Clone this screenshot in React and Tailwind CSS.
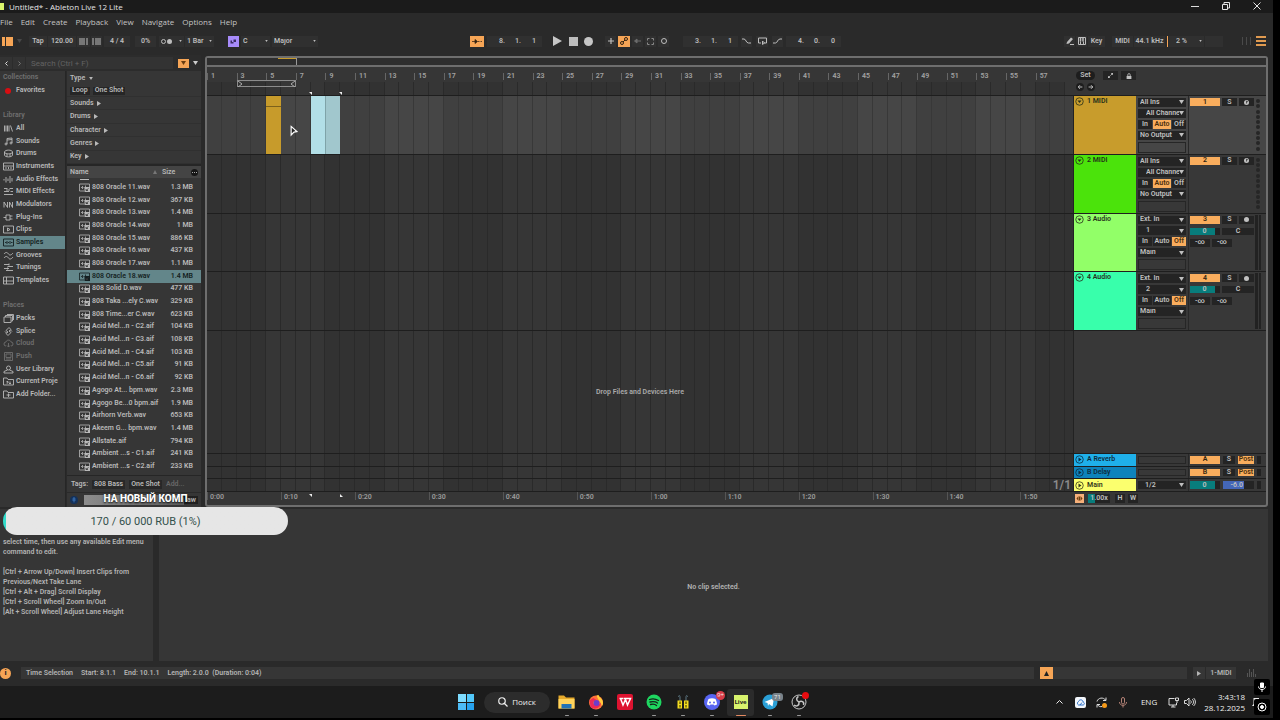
import React from 'react';

const BARS = 58;

const ICONS = {
  all: <path d="M3 3v12M6 3v12M9 3v12M12 3v12M15 3l4 12" />,
  sounds: <path d="M8 14V3l10-1v10M8 6l10-1M8 14a2 2 0 1 1-4 0 2 2 0 1 1 4 0M18 12a2 2 0 1 1-4 0 2 2 0 1 1 4 0" />,
  drums: <path d="M3 6c0-5 16-5 16 0s-16 5-16 0v6c0 5 16 5 16 0V6M8 10v5M14 10v5" />,
  instruments: <path d="M1 2h20v14H1zM1 8h20M6 10v4M11 10v4M16 10v4" />,
  audioFx: <path d="M2 8v3M6 4v11M10 7v5M14 2v14M18 6v7" />,
  midiFx: <path d="M2 3h7M13 3h7M2 9h10M15 9h5M2 15h18M6 6h8" />,
  modulators: <path d="M2 15V4l7 11V4M13 15V4l6 11V4" />,
  plugins: <path d="M1 9h5M6 4h8v10H6zM14 6h5M14 12h5" />,
  clips: <path d="M1 2h20v14H1zM9 6v6l5-3z" />,
  samples: <path d="M1 2h20v14H1zM4 9h3M8 6v6M11 8v2M14 6v6M16 9h3" />,
  grooves: <path d="M2 6c4-5 7-3 9 0s5 3 9-2M2 14c4-5 7-3 9 0s5 3 9-2" />,
  tunings: <path d="M2 3h10M9 7h11M2 11h10M6 15h14M12 1v4M9 9v4" />,
  templates: <path d="M1 2h20v14H1zM1 10h20M7 2v14" />,
  packs: <path d="M2 6h14v11H2zM5 6V3h14v11h-3M8 1h13v11" />,
  splice: <path d="M12 1l-6 6 4 3-4 3 4 4 6-6-4-3 4-3zM4 9l3 3M15 6l3 3" />,
  cloud: <path d="M6 14a4 4 0 0 1 0-8c1-5 9-5 10 0a4 4 0 0 1 0 8M11 8v8M8 13l3 3 3-3" />,
  push: <path d="M3 1h16v16H3zM6 4h10v7H6zM6 14h10" />,
  user: <path d="M7 6a4 4 0 1 1 8 0a4 4 0 1 1-8 0M9 10l-7 3v3h18v-3l-7-3" />,
  project: <path d="M1 16V2h7l2 3h11v11zM7 9h3v3H7M14 9v4M12 13h4" />,
  add: <path d="M1 16V2h7l2 3h11v11zM11 7v7M7 10h8" />,
};

const LIBRARY = [
  ['all', 'All'],
  ['sounds', 'Sounds'],
  ['drums', 'Drums'],
  ['instruments', 'Instruments'],
  ['audioFx', 'Audio Effects'],
  ['midiFx', 'MIDI Effects'],
  ['modulators', 'Modulators'],
  ['plugins', 'Plug-Ins'],
  ['clips', 'Clips'],
  ['samples', 'Samples'],
  ['grooves', 'Grooves'],
  ['tunings', 'Tunings'],
  ['templates', 'Templates'],
];

const PLACES = [
  ['packs', 'Packs'],
  ['splice', 'Splice'],
  ['cloud', 'Cloud'],
  ['push', 'Push'],
  ['user', 'User Library'],
  ['project', 'Current Proje'],
  ['add', 'Add Folder...'],
];

const FILES = [
  ['808 Oracle 11.wav', '1.3 MB'],
  ['808 Oracle 12.wav', '367 KB'],
  ['808 Oracle 13.wav', '1.4 MB'],
  ['808 Oracle 14.wav', '1 MB'],
  ['808 Oracle 15.wav', '886 KB'],
  ['808 Oracle 16.wav', '437 KB'],
  ['808 Oracle 17.wav', '1.1 MB'],
  ['808 Oracle 18.wav', '1.4 MB'],
  ['808 Solid D.wav', '477 KB'],
  ['808 Taka ...ely C.wav', '329 KB'],
  ['808 Time...er C.wav', '623 KB'],
  ['Acid Mel...n - C2.aif', '104 KB'],
  ['Acid Mel...n - C3.aif', '108 KB'],
  ['Acid Mel...n - C4.aif', '103 KB'],
  ['Acid Mel...n - C5.aif', '91 KB'],
  ['Acid Mel...n - C6.aif', '92 KB'],
  ['Agogo At... bpm.wav', '2.3 MB'],
  ['Agogo Be...0 bpm.aif', '1.9 MB'],
  ['Airhorn Verb.wav', '653 KB'],
  ['Akeem G... bpm.wav', '1.4 MB'],
  ['Allstate.aif', '794 KB'],
  ['Ambient ...s - C1.aif', '241 KB'],
  ['Ambient ...s - C2.aif', '233 KB'],
];

const TRACKS = [
  { id: '1', name: '1 MIDI', color: 'bg-[#c89c2c]', input: 'All Ins', channel: 'All Channels', output: 'No Output', monitor: 'Auto', midi: true },
  { id: '2', name: '2 MIDI', color: 'bg-[#4be30b]', input: 'All Ins', channel: 'All Channels', output: 'No Output', monitor: 'Auto', midi: true },
  { id: '3', name: '3 Audio', color: 'bg-[#92ff68]', input: 'Ext. In', channel: '1', output: 'Main', monitor: 'Off' },
  { id: '4', name: '4 Audio', color: 'bg-[#38ffab]', input: 'Ext. In', channel: '2', output: 'Main', monitor: 'Off' },
];

const Glyph = ({ name }) => (
  <svg viewBox="0 0 22 18" className="w-[11px] h-[9px] shrink-0" fill="none" stroke="currentColor" strokeWidth="1.8">
    {ICONS[name]}
  </svg>
);

const Caret = ({ className = 'w-[5px] h-1' }) => (
  <svg viewBox="0 0 10 8" className={`shrink-0 ${className}`} fill="currentColor">
    <path d="M0 0h10L5 8z" />
  </svg>
);

const Right = () => (
  <svg viewBox="0 0 8 10" className="w-1 h-[5px] shrink-0" fill="currentColor">
    <path d="M0 0v10l8-5z" />
  </svg>
);

const Pick = ({ label, value, className = '', inner = 'pl-[2px]', caret }) => (
  <span className={`flex items-center min-w-0 pr-[2px] ${className}`}>
    <select aria-label={label} className={`appearance-none flex-1 min-w-0 h-full outline-none bg-transparent leading-none ${inner}`} defaultValue={value}>
      <option>{value}</option>
    </select>
    <Caret className={caret} />
  </span>
);

const TitleBar = () => (
  <div className="flex items-center h-[13px] pb-px bg-[#1b1b1b] text-[#e4e4e4] font-['Open_Sans',sans-serif]">
    <span className="w-1 h-[7px] bg-[#d9f36b]" />
    <h1 className="ml-[5px] text-[8px] leading-[11px] font-medium">Untitled* - Ableton Live 12 Lite</h1>
    <div className="ml-auto flex items-center gap-[23px] pr-3">
      <button aria-label="Minimize" className="w-2 h-px bg-[#ddd]" />
      <button aria-label="Restore">
        <svg viewBox="0 0 16 16" className="w-2 h-2" fill="none" stroke="currentColor" strokeWidth="2">
          <path d="M1 5h10v10H1zM4 4V1h11v11h-3" />
        </svg>
      </button>
      <button aria-label="Close">
        <svg viewBox="0 0 16 16" className="w-2 h-2" fill="none" stroke="currentColor" strokeWidth="2">
          <path d="M1 1l14 14M15 1L1 15" />
        </svg>
      </button>
    </div>
  </div>
);

const MenuBar = () => (
  <nav className="flex items-center gap-2 h-[18px] text-[8px] text-[#c4c4c4] font-['Open_Sans',sans-serif]">
    {['File', 'Edit', 'Create', 'Playback', 'View', 'Navigate', 'Options', 'Help'].map((m) => (
      <button key={m}>{m}</button>
    ))}
  </nav>
);

const box = 'h-[11px] bg-[#303030] flex items-center justify-center shrink-0';

const Position = ({ label, parts }) => (
  <div role="group" aria-label={label} className="h-[11px] w-[55px] pl-[7px] bg-[#303030] grid grid-cols-3 items-center text-center shrink-0">
    {parts.map((p, i) => (
      <span key={i}>{p}</span>
    ))}
  </div>
);

const Toolbar = () => (
  <div className="flex items-center h-6 pb-1 text-[7px] leading-none font-semibold text-[#bdbdbd]">
    <div className="w-[470px] shrink-0 flex items-center">
      <button aria-label="Toggle browser" className="ml-[2px] flex gap-px w-[11px] h-[9px]">
        <span className="w-[3px] h-full bg-[#f6a556]" />
        <span className="flex-1 h-full bg-[#f6a556]" />
      </button>
      <Caret className="w-[5px] h-1 ml-1 text-[#484848]" />
      <button className={`${box} ml-[7px] w-[18px]`}>Tap</button>
      <input aria-label="Tempo" defaultValue="120.00" className="ml-px h-[11px] w-[28px] bg-[#303030] text-center shrink-0" />
      <button aria-label="Nudge down" className={`${box} ml-px w-[13px]`}>
        <svg viewBox="0 0 18 14" className="w-[9px] h-[7px]" stroke="currentColor" strokeWidth="2"><path d="M2 0v14M6 0v14M10 0v14M16 0v14" /></svg>
      </button>
      <button aria-label="Nudge up" className={`${box} ml-px w-[11px]`}>
        <svg viewBox="0 0 18 14" className="w-[9px] h-[7px]" stroke="currentColor" strokeWidth="2"><path d="M2 0v14M8 0v14M12 0v14M16 0v14" /></svg>
      </button>
      <input aria-label="Time signature" defaultValue="4 / 4" className="ml-[2px] h-[11px] w-[26px] bg-[#303030] text-center shrink-0" />
      <input aria-label="Groove amount" defaultValue="0%" className="ml-[5px] h-[11px] w-[21px] bg-[#303030] text-center shrink-0" />
      <button aria-label="Metronome" className={`${box} ml-[3px] w-[25px] gap-px`}>
        <span className="size-[5px] rounded-full border border-[#bdbdbd]" />
        <span className="size-[5px] rounded-full bg-[#bdbdbd]" />
        <Caret className="ml-[6px] w-[3px] h-[2px]" />
      </button>
      <Pick label="Quantization" value="1 Bar" className="ml-px h-[11px] w-[29px] bg-[#303030]" caret="w-[3px] h-[2px]" />
      <button aria-label="Scale mode" className="ml-[14px] size-[11px] bg-[#a78bfa] flex items-center justify-center text-[#3a2c63]">
        <svg viewBox="0 0 14 14" className="size-[7px]" fill="currentColor"><path d="M1 5h3v6H1zM4 8h3v3H4zM7 3h5v5H7z" /></svg>
      </button>
      <Pick label="Root note" value="C" className="ml-[2px] h-[11px] w-[29px] bg-[#303030]" inner="pl-[2px]" caret="w-[3px] h-[2px]" />
      <Pick label="Scale name" value="Major" className="ml-[2px] h-[11px] w-[46px] bg-[#303030]" caret="w-[3px] h-[2px]" />
    </div>

    <button aria-label="Follow" className="h-[11px] w-[14px] bg-[#f6a556] text-[#332211] flex items-center justify-center">
      <svg viewBox="0 0 20 10" className="w-[10px] h-[5px]" fill="currentColor" stroke="currentColor" strokeWidth="1.5"><path d="M0 5h6M6 1l5 4-5 4zM12 5h2M15 5h2M18 5h2" /></svg>
    </button>
    <div className="ml-[3px]"><Position label="Arrangement position" parts={['8.', '1.', '1']} /></div>
    <div className="ml-[11px] flex items-center gap-[6px] text-[#c6c6c6]">
      <button aria-label="Play"><svg viewBox="0 0 10 10" className="size-[10px]" fill="currentColor"><path d="M0 0v10l9-5z" /></svg></button>
      <button aria-label="Stop" className="size-[9px] bg-[#bdbdbd]" />
      <button aria-label="Record" className="size-[9px] rounded-full bg-[#c6c6c6]" />
    </div>
    <div className="ml-3 flex items-center gap-[2px]">
      <button aria-label="Overdub" className={`${box} w-[11px]`}>
        <svg viewBox="0 0 10 10" className="size-[6px]" stroke="currentColor" strokeWidth="2"><path d="M5 0v10M0 5h10" /></svg>
      </button>
      <button aria-label="Automation arm" className="h-[11px] w-3 bg-[#f6a556] text-[#332211] flex items-center justify-center">
        <svg viewBox="0 0 16 16" className="size-2" fill="none" stroke="currentColor" strokeWidth="2"><circle cx="4" cy="12" r="3" /><circle cx="12" cy="4" r="3" /><path d="M6 10l4-4" /></svg>
      </button>
      <button aria-label="Re-enable automation" className={`${box} w-[11px] text-[#6c6c6c]`}>
        <svg viewBox="0 0 14 12" className="w-[7px] h-[6px]" fill="currentColor" stroke="currentColor" strokeWidth="2"><path d="M14 6H6M6 2L1 6l5 4z" /></svg>
      </button>
      <button aria-label="Capture" className={`${box} w-[11px] text-[#8a8a8a]`}>
        <svg viewBox="0 0 14 14" className="size-[7px]" fill="none" stroke="currentColor" strokeWidth="2"><path d="M1 5V1h4M9 1h4v4M13 9v4H9M5 13H1V9" /></svg>
      </button>
      <button aria-label="Session record" className={`${box} w-[11px]`}>
        <span className="size-[6px] rounded-full border border-[#bdbdbd]" />
      </button>
    </div>
    <div className="ml-[14px] flex items-center">
      <Position label="Loop start" parts={['3.', '1.', '1']} />
      <div className="flex items-center gap-1 px-[3px]">
        <button aria-label="Punch in" className={`${box} w-[11px]`}><svg viewBox="0 0 18 12" className="w-[9px] h-[6px]" fill="none" stroke="currentColor" strokeWidth="2"><path d="M0 2h4c4 0 4 8 9 8h5" /></svg></button>
        <button aria-label="Loop" className={`${box} w-3`}><svg viewBox="0 0 18 16" className="w-[9px] h-2" fill="none" stroke="currentColor" strokeWidth="2"><path d="M6 12H1V2h16v10h-5M9 8l4 4-4 3z" /></svg></button>
        <button aria-label="Punch out" className={`${box} w-[11px]`}><svg viewBox="0 0 18 12" className="w-[9px] h-[6px]" fill="none" stroke="currentColor" strokeWidth="2"><path d="M0 10h5c4 0 4-8 9-8h4" /></svg></button>
      </div>
      <Position label="Loop length" parts={['4.', '0.', '0']} />
    </div>

    <div className="ml-auto pr-[7px] flex items-center">
      <button aria-label="Draw mode" className={`${box} w-[11px]`}>
        <svg viewBox="0 0 16 16" className="size-2" fill="currentColor"><path d="M2 10l8-9 4 3-8 9-5 1zM8 14h8v2H8z" /></svg>
      </button>
      <button aria-label="Computer MIDI keyboard" className={`${box} ml-px w-[11px]`}>
        <svg viewBox="0 0 16 16" className="size-2" fill="none" stroke="currentColor" strokeWidth="2"><path d="M1 1h14v14H1zM5 9v6M11 9v6" /><path d="M5 1v8M10 1v8" strokeWidth="3" /></svg>
      </button>
      <button className={`${box} ml-px w-[17px]`}>Key</button>
      <button className={`${box} ml-[7px] w-[21px]`}>MIDI</button>
      <button className={`${box} ml-px w-[31px]`}>44.1 kHz</button>
      <span className="ml-[2px] w-px h-[11px] bg-[#f6a556]" />
      <Pick label="CPU meter" value="2 %" className="ml-px h-[11px] w-[35px] bg-[#303030]" inner="pl-[7px]" caret="w-[3px] h-[2px]" />
      <span className={`${box} ml-px w-[18px]`} />
      <span className="ml-[19px] flex gap-[3px]">
        <span className="w-px h-2 bg-[#4a4a4a]" />
        <span className="w-px h-2 bg-[#4a4a4a]" />
        <span className="w-px h-2 bg-[#4a4a4a]" />
      </span>
      <button aria-label="View options" className="ml-[5px] w-[10px] flex flex-col gap-[2px]">
        <span className="h-[2px] bg-[#e09a50]" />
        <span className="h-[2px] bg-[#e09a50]" />
        <span className="h-[2px] bg-[#e09a50]" />
      </button>
    </div>
  </div>
);

const SideItem = ({ icon, label }) => {
  const active = icon === 'samples';
  const dim = icon === 'cloud' || icon === 'push';
  return (
    <button className={`flex flex-1 w-full items-center gap-[2px] pl-[3px] overflow-hidden whitespace-nowrap ${active ? 'bg-[#63868a] text-[#141f21]' : dim ? 'text-[#6e6e6e]' : ''}`}>
      <Glyph name={icon} />
      {label}
    </button>
  );
};

const Sidebar = () => (
  <aside className="w-[66px] shrink-0 bg-[#363636] border-r border-[#262626] flex flex-col">
    <h2 className="h-[13px] leading-[13px] pl-[3px] text-[#707070]">Collections</h2>
    <button className="h-[13px] flex items-center gap-[5px] pl-[5px]">
      <span className="size-[6px] rounded-full bg-[#d80d12]" />
      Favorites
    </button>
    <h2 className="mt-3 h-[13px] leading-[13px] pl-[3px] text-[#707070]">Library</h2>
    <div className="h-[165px] flex flex-col">
      {LIBRARY.map(([icon, label]) => <SideItem key={icon} icon={icon} label={label} />)}
    </div>
    <h2 className="mt-3 h-[13px] leading-[13px] pl-[3px] text-[#707070]">Places</h2>
    <div className="h-[89px] flex flex-col">
      {PLACES.map(([icon, label]) => <SideItem key={icon} icon={icon} label={label} />)}
    </div>
  </aside>
);

const FileIcon = () => (
  <svg viewBox="0 0 22 18" className="w-[11px] h-[9px] ml-3 shrink-0" fill="none" stroke="currentColor" strokeWidth="1.6">
    <path d="M10 16H1V2h20v6M4 9h2M7 6v6M10 8v2M13 5v3" />
    <path d="M11 8h11v10H11z" fill="currentColor" stroke="none" />
    <path d="M14 15l5-4M14 12v3h4" stroke="#363636" />
  </svg>
);

const FileList = () => (
  <table className="w-full h-[307px] border-collapse table-fixed">
    <thead className="bg-[#444]">
      <tr className="h-3">
        <th scope="col" className="w-[91px] p-0 pl-[3px] text-left font-semibold">
          <span className="flex items-center justify-between pr-px">
            Name
            <svg viewBox="0 0 8 8" className="size-1" fill="#777"><path d="M4 0l4 8H0z" /></svg>
          </span>
        </th>
        <th scope="col" className="p-0 pl-1 text-left font-semibold">
          <span className="flex items-center justify-between pr-[3px]">
            Size
            <button aria-label="Columns" className="w-[7px] h-[7px] rounded-full bg-[#161616] flex items-center justify-center gap-px">
              <span className="size-px bg-[#aaa]" /><span className="size-px bg-[#aaa]" /><span className="size-px bg-[#aaa]" />
            </button>
          </span>
        </th>
      </tr>
    </thead>
    <tbody>
      <tr className="h-[3px]" aria-hidden="true">
        <td colSpan="2" className="p-0"><span className="block ml-[13px] w-[9px] h-px bg-[#bbb]" /></td>
      </tr>
      {FILES.map(([name, size]) => (
        <tr key={name} className={name === '808 Oracle 18.wav' ? 'bg-[#63868a] text-[#141f21]' : ''}>
          <td className="p-0"><span className="flex items-center gap-[2px] whitespace-nowrap"><FileIcon />{name}</span></td>
          <td className="p-0 pr-2 text-right whitespace-nowrap">{size}</td>
        </tr>
      ))}
    </tbody>
  </table>
);

const Browser = () => (
  <section className="w-[201px] shrink-0 flex flex-col text-[7px] leading-none font-semibold text-[#b9b9b9]">
    <div className="h-4 flex items-center gap-px bg-[#2c2c2c]">
      <button aria-label="Back" className="w-3 h-3 bg-[#333] text-[#ddd] flex items-center justify-center">
        <svg viewBox="0 0 6 10" className="w-[3px] h-[5px]" fill="none" stroke="currentColor" strokeWidth="2"><path d="M5 1L1 5l4 4" /></svg>
      </button>
      <button aria-label="Forward" className="w-3 h-3 bg-[#333] text-[#777] flex items-center justify-center">
        <svg viewBox="0 0 6 10" className="w-[3px] h-[5px]" fill="none" stroke="currentColor" strokeWidth="2"><path d="M1 1l4 4-4 4" /></svg>
      </button>
      <input aria-label="Search" placeholder="Search (Ctrl + F)" className="h-3 flex-1 min-w-0 pl-[5px] bg-[#333] text-[8px] font-normal placeholder:text-[#626262]" />
      <button aria-label="Filter" className="ml-1 w-[11px] h-[9px] bg-[#f6a556] text-[#6b3d10] flex items-center justify-center"><Caret /></button>
      <button aria-label="Filter options" className="ml-[3px] mr-[3px] text-[#ccc]"><Caret /></button>
    </div>
    <div className="flex flex-1">
      <Sidebar />
      <div className="flex-1 min-w-0 ml-px bg-[#363636] flex flex-col">
        <button className="h-[14px] flex items-center gap-1 pl-[3px]">Type <Caret className="w-1 h-[3px]" /></button>
        <div className="h-3 flex items-center gap-[3px] pl-[3px] border-b border-[#303030]">
          <button className="h-2 px-[2px] bg-[#262626]">Loop</button>
          <button className="h-2 px-[2px] bg-[#262626]">One Shot</button>
        </div>
        <div className="h-[67px] flex flex-col">
          {['Sounds', 'Drums', 'Character', 'Genres', 'Key'].map((f) => (
            <button key={f} className="flex-1 flex items-center gap-[3px] pl-[3px] border-b border-[#303030]">{f} <Right /></button>
          ))}
        </div>
        <div className="border-t-2 border-[#262626]"><FileList /></div>
        <div className="mt-[2px] flex-1 flex items-center gap-1 pl-1 border-t border-[#262626]">
          Tags:
          <button className="h-[9px] px-[2px] bg-[#282828]">808 Bass</button>
          <button className="h-[9px] px-[2px] bg-[#282828]">One Shot</button>
          <button className="text-[#686868]">Add...</button>
        </div>
        <div className="h-[15px] flex items-center pl-[3px] pr-[3px] border-t border-[#2a2a2a]">
          <button aria-label="Preview" className="size-2 rounded-full bg-[#14315a] text-[#4e96e8] flex items-center justify-center">
            <svg viewBox="0 0 10 10" className="size-[6px]" fill="none" stroke="currentColor"><path d="M5 1v8M3 3l2-2 2 2M2 5h6" /></svg>
          </button>
          <span className="ml-[6px] flex-1 h-[10px] bg-gradient-to-r from-[#8d8d8d] to-[#5c5c5c]" />
          <button aria-label="Raw" className="h-2 w-[14px] pr-[2px] text-right bg-[#202020]">aw</button>
        </div>
      </div>
    </div>
  </section>
);

const Grid = ({ light }) => (
  <div className="absolute inset-0 flex">
    {Array.from({ length: BARS }, (_, i) => {
      const odd = Math.floor(i / 4) % 2;
      const shade = light ? (odd ? 'bg-[#464646]' : 'bg-[#404040]') : odd ? 'bg-[#363636]' : 'bg-[#323232]';
      return <span key={i} className={`flex-1 border-r ${light ? 'border-[#383838]' : 'border-[#2a2a2a]'} ${shade}`} />;
    })}
  </div>
);

const at = (bar) => `${((bar - 1) / BARS) * 100}%`;
const span = (n) => `${(n / BARS) * 100}%`;

// One arrangement row: the lane on the left, its header on the right
const Row = ({ light, className = '', lane, children }) => (
  <div className={`flex border-b border-[#1e1e1e] ${className}`}>
    <div className="relative flex-1">
      <Grid light={light} />
      {lane}
    </div>
    <div className={`w-[9px] shrink-0 border-r border-[#222] ${light ? 'bg-[#404040]' : 'bg-[#323232]'}`} />
    <div className={`w-[192px] shrink-0 flex ${light ? 'bg-[#464646]' : 'bg-[#383838]'}`}>{children}</div>
  </div>
);

const RoundIcon = ({ play }) => (
  <svg viewBox="0 0 18 18" className="size-[9px] shrink-0" fill="none" stroke="currentColor" strokeWidth="1.6">
    <circle cx="9" cy="9" r="7.5" />
    <path d={play ? 'M7 5v8l6-4z' : 'M5 7h8l-4 5z'} fill="currentColor" stroke="none" />
  </svg>
);

const dark = 'bg-[#242424] flex items-center justify-center';

const Mixer = ({ track }) => (
  <div className="flex-1 flex border-l border-[#282828]">
    <div className="w-[66px] px-px pt-px flex flex-col gap-[2px]">
      <div className="h-[10px] py-px flex gap-[2px]">
        <button className="w-[30px] bg-[#f9ad5d] text-[#33240f]">{track.id}</button>
        <button className={`${dark} w-[15px]`}>S</button>
        <button aria-label="Arm" className={`${dark} w-[15px]`}>
          <svg viewBox="0 0 10 10" className="size-[5px]" fill="currentColor">
            <circle cx="5" cy="5" r="5" />
            {track.midi && <path d="M5 7V2l3 2" fill="none" stroke="#242424" strokeWidth="1.4" />}
          </svg>
        </button>
      </div>
      {!track.midi && (
        <>
          <div className="h-[9px] py-px flex gap-[2px]">
            <button aria-label="Volume" className="w-[30px] bg-[#242424] text-left"><span className="flex items-center justify-center w-[25px] h-full pl-1 bg-[#087d7c]">0</span></button>
            <button aria-label="Pan" className={`${dark} w-8`}>C</button>
          </div>
          <div className="h-[10px] py-px flex gap-[2px]">
            <button aria-label="Send A" className={`${dark} w-[20px]`}>-∞</button>
            <button aria-label="Send B" className={`${dark} w-[20px]`}>-∞</button>
          </div>
        </>
      )}
    </div>
    {track.midi ? (
      <div className="w-[6px] my-[3px] flex flex-col justify-between items-center">
        {Array.from({ length: 10 }, (_, i) => <span key={i} className="size-1 rounded-full bg-[#262626]" />)}
      </div>
    ) : (
      <div className="w-[6px] my-px flex gap-px">
        <span className="flex-1 bg-[#222]" />
        <span className="flex-1 bg-[#222]" />
      </div>
    )}
  </div>
);

const TrackHeader = ({ track }) => (
  <>
    <div className={`w-[62px] shrink-0 ${track.color} flex items-start gap-[3px] pl-px pt-[1px] text-[#26301a]`}>
      <button aria-label="Fold track"><RoundIcon /></button>
      <span className="leading-[9px]">{track.name}</span>
    </div>
    <div className="w-[52px] shrink-0 px-[2px] pt-[2px] pb-px flex flex-col gap-[2px]">
      <Pick label={`${track.name} input`} value={track.input} className="flex-1 bg-[#242424]" />
      <Pick label={`${track.name} input channel`} value={track.channel} className="flex-1 bg-[#242424]" inner="pl-[8px]" />
      <div className="flex-1 flex gap-px">
        {['In', 'Auto', 'Off'].map((m) => (
          <button key={m} className={`${m === 'Auto' ? 'w-[18px]' : 'flex-1'} ${m === track.monitor ? 'bg-[#f9ad5d] text-[#4a2e0c]' : 'bg-[#242424]'}`}>{m}</button>
        ))}
      </div>
      <Pick label={`${track.name} output`} value={track.output} className="flex-1 bg-[#242424]" />
      <div className="flex-1 border border-[#262626]" />
    </div>
    <Mixer track={track} />
  </>
);

const clips = (
  <>
    <div className="absolute inset-y-0 bg-[#c79b2b]" style={{ left: at(5), width: span(1) }}>
      <div className="h-[11px] border-b border-[#7c611c]" />
    </div>
    <div className="absolute inset-y-0 flex" style={{ left: at(8), width: span(2) }}>
      <span className="flex-1 bg-[#b2dfe7] border-r border-[#7fa3a8]" />
      <span className="flex-1 bg-[#a1c7cd]" />
    </div>
    <svg viewBox="0 0 14 20" className="absolute top-[29px] w-2 h-3" style={{ left: at(6.6) }} fill="#222" stroke="#fff" strokeWidth="2">
      <path d="M2 2l10 9-5 1-5 5z" />
    </svg>
  </>
);

const Handle = ({ bar, flip, className }) => (
  <svg viewBox="0 0 4 4" className={`absolute size-[3px] ${className}`} style={{ left: at(bar) }} fill="#eee">
    <path d={flip ? 'M0 4h4L0 0z' : 'M0 0h4v4z'} />
  </svg>
);

const Ruler = () => (
  <div className="flex h-[29px] border-b border-[#1e1e1e] bg-[#363636]">
    <div className="relative flex-1 flex flex-col">
      <div className="h-[15px] flex pt-[6px]">
        {Array.from({ length: BARS / 2 }, (_, i) => (
          <span key={i} className="flex-1 basis-0 min-w-0 border-l border-[#666] pl-[3px] text-[#a3a3a3] text-[7px] leading-[7px] h-[7px]">{i * 2 + 1}</span>
        ))}
      </div>
      <div className="relative flex-1">
        <Grid />
      </div>
      <div className="absolute top-[13px] h-[7px] border border-[#8c8c8c] flex items-center justify-between text-[#aaa]" style={{ left: at(3), width: span(4) }}>
        <svg viewBox="0 0 5 6" className="w-[5px] h-[6px]" fill="none" stroke="currentColor"><path d="M0 0l4 3-4 3" /></svg>
        <svg viewBox="0 0 5 6" className="w-[5px] h-[6px]" fill="none" stroke="currentColor"><path d="M5 0L1 3l4 3" /></svg>
      </div>
      <Handle bar={7.9} className="bottom-0" />
      <Handle bar={9.9} className="bottom-0" />
    </div>
    <div className="w-[9px] shrink-0" />
    <div className="w-[192px] shrink-0 pl-[2px] pt-1 flex flex-col gap-[3px]">
      <div className="flex items-center gap-2 h-[9px]">
        <button className="h-[9px] w-[19px] rounded-full bg-[#1d1d1d]">Set</button>
        <div className="flex gap-[3px]">
          <button aria-label="Automation mode" className={`${dark} w-[15px] h-[9px]`}>
            <svg viewBox="0 0 10 10" className="size-[5px]" fill="currentColor" stroke="currentColor"><path d="M2 8l6-6M0 7h3v3H0zM7 0h3v3H7z" /></svg>
          </button>
          <button aria-label="Lock envelopes" className={`${dark} w-[15px] h-[9px]`}>
            <svg viewBox="0 0 10 10" className="size-[6px]" fill="currentColor"><path d="M1 5h8v5H1z" /><path d="M3 5V3a2 2 0 0 1 4 0v2" fill="none" stroke="currentColor" strokeWidth="1.4" /></svg>
          </button>
        </div>
      </div>
      <div className="flex gap-[3px] h-2">
        {['M9 5H2M5 2L2 5l3 3', 'M1 5h7M5 2l3 3-3 3'].map((d) => (
          <button key={d} aria-label="Locator" className="size-2 rounded-full bg-[#1d1d1d] flex items-center justify-center">
            <svg viewBox="0 0 10 10" className="size-[6px]" fill="none" stroke="currentColor" strokeWidth="1.6"><path d={d} /></svg>
          </button>
        ))}
      </div>
    </div>
  </div>
);

const TIMES = ['0:00', '0:10', '0:20', '0:30', '0:40', '0:50', '1:00', '1:10', '1:20', '1:30', '1:40', '1:50'];

const Returns = ({ id, name, color }) => (
  <>
    <div className={`w-[62px] shrink-0 ${color} flex items-center gap-[3px] pl-px text-[#0d2c40]`}>
      <button aria-label={`Unfold ${name}`}><RoundIcon play /></button>
      {name}
    </div>
    <div className="w-[52px] shrink-0 p-[2px] flex"><div className="flex-1 border border-[#262626]" /></div>
    <div className="flex-1 flex gap-[3px] pl-px py-[2px] border-l border-[#282828]">
      <button className="w-[30px] bg-[#f9ad5d] text-[#33240f]">{id}</button>
      <button className={`${dark} w-3`}>S</button>
      <button className="w-4 bg-[#f9ad5d] text-[#4a2e0c]">Post</button>
      <span className="w-1 bg-[#222]" />
    </div>
  </>
);

const Arrangement = () => (
  <section className="flex-1 min-w-0 ml-1 mr-[5px] mt-px border-2 border-[#6e6e6e] rounded-[3px] bg-[#363636] flex flex-col text-[7px] leading-none font-semibold text-[#c0c0c0]">
    <div className="relative h-[9px] border-b-2 border-[#6e6e6e] bg-[#2e2e2e]">
      <div className="absolute inset-y-0 left-0 w-[90px] border-r border-[#999] flex justify-end">
        <span className="w-[18px] h-px bg-[#c79b2b]" />
      </div>
    </div>
    <Ruler />
    <div className="h-[235px] flex flex-col">
      {TRACKS.map((t, i) => (
        <Row key={t.id} light={i === 0} className="flex-1" lane={i === 0 ? clips : null}>
          <TrackHeader track={t} />
        </Row>
      ))}
    </div>
    <Row className="flex-1" lane={(
      <span className="absolute inset-0 flex items-center justify-center pl-2 text-[#aaa]">Drop Files and Devices Here</span>
    )} />
    <div className="relative h-[38px] flex flex-col">
      <Row className="flex-1"><Returns id="A" name="A Reverb" color="bg-[#1fb0ea]" /></Row>
      <Row className="flex-1"><Returns id="B" name="B Delay" color="bg-[#0d83bb]" /></Row>
      <Row className="flex-1">
        <div className="w-[62px] shrink-0 bg-[#fbff6e] flex items-center gap-[3px] pl-px text-[#33351a]">
          <button aria-label="Unfold Main"><RoundIcon play /></button>
          Main
        </div>
        <div className="w-[52px] shrink-0 p-[2px] flex"><Pick label="Main output" value="1/2" className="flex-1 bg-[#242424]" inner="pl-[7px]" /></div>
        <div className="flex-1 flex gap-[3px] pl-px py-[2px] border-l border-[#282828]">
          <button aria-label="Main volume" className="w-[30px] bg-[#242424]"><span className="flex items-center justify-center w-[25px] h-full pl-1 bg-[#087d7c]">0</span></button>
          <button aria-label="Cue volume" className="w-[31px] bg-[#242424]"><span className="flex items-center justify-end pr-px w-[21px] h-full bg-[#4467b8]">-6.0</span></button>
          <span className="w-1 bg-[#222]" />
        </div>
      </Row>
      <span className="absolute bottom-0 right-[195px] text-[12px] leading-[14px] text-[#8c8c8c]">1/1</span>
    </div>
    <div className="h-[13px] flex">
      <div className="relative flex-1 flex overflow-hidden">
        {TIMES.map((t) => (
          <span key={t} className="shrink-0 h-2 border-l border-[#555] pl-[2px] pt-[2px] text-[#9c9c9c]" style={{ width: span(5) }}>{t}</span>
        ))}
        <Handle bar={7.9} className="top-[2px]" />
        <Handle bar={10} flip className="top-[2px]" />
      </div>
      <div className="w-[9px] shrink-0" />
      <div className="w-[192px] shrink-0 flex items-center gap-1 pl-px">
        <button aria-label="Optimize width" className="size-[9px] bg-[#f6b07a] text-[#6b3d10] flex items-center justify-center">
          <svg viewBox="0 0 12 10" className="w-[7px] h-[5px]" fill="currentColor"><path d="M4 0v10L0 5zM5 1h2v8H5zM8 0v10l4-5z" /></svg>
        </button>
        <button className="h-[9px] w-[22px] bg-gradient-to-r from-[#087d7c] from-30% to-[#242424] to-30%">1.00x</button>
        <div className="flex gap-[3px] pl-px">
          <button className={`${dark} h-[9px] w-[10px]`}>H</button>
          <button className={`${dark} h-[9px] w-[10px]`}>W</button>
        </div>
      </div>
    </div>
  </section>
);

const Goal = () => (
  <div className="absolute left-[3px] top-[436px] w-[285px] text-center">
    <p className="h-4 text-[10px] leading-[15px] font-extrabold text-white [text-shadow:0_1px_2px_#000]">НА НОВЫЙ КОМП</p>
    <div className="h-7 rounded-full overflow-hidden bg-gradient-to-r from-[#33dccb] from-1% to-[#e6e6e6] to-1% text-[#34504b] text-[11px] leading-[29px]">170 / 60 000 RUB (1%)</div>
  </div>
);

const Detail = () => (
  <div className="flex h-[152px] mr-[5px] text-[7px] font-semibold text-[#b4b4b4]">
    <aside className="w-[153px] shrink-0 bg-[#363636] pl-[3px] pt-[28px] leading-[10px] whitespace-nowrap">
      <p>select time, then use any available Edit menu<br />command to edit.</p>
      <p className="mt-[10px]">
        [Ctrl + Arrow Up/Down] Insert Clips from<br />
        Previous/Next Take Lane<br />
        [Ctrl + Alt + Drag] Scroll Display<br />
        [Ctrl + Scroll Wheel] Zoom In/Out<br />
        [Alt + Scroll Wheel] Adjust Lane Height
      </p>
    </aside>
    <div className="ml-[6px] pt-1 flex-1 bg-[#363636] flex items-center justify-center">No clip selected.</div>
  </div>
);

const StatusBar = () => (
  <footer className="flex items-center h-[25px] pb-px text-[7px] leading-none font-semibold text-[#b4b4b4]">
    <button aria-label="Info" className="size-[11px] rounded-full bg-[#f6a556] text-[#222] text-[8px] font-bold">i</button>
    <div className="ml-[10px] flex-1 h-3 bg-[#363636] flex items-center gap-2 pl-[5px]">
      <span>Time Selection</span>
      <span>Start: 8.1.1</span>
      <span>End: 10.1.1</span>
      <span>Length: 2.0.0&nbsp; (Duration: 0:04)</span>
    </div>
    <button aria-label="Show view" className="ml-[6px] w-[13px] h-3 bg-[#f6a556] text-[#222] flex items-center justify-center">
      <svg viewBox="0 0 8 8" className="size-[5px]" fill="currentColor"><path d="M4 0l4 8H0z" /></svg>
    </button>
    <div className="w-[134px] h-3 bg-[#363636]" />
    <button aria-label="Play clip" className="ml-[6px] w-3 h-3 bg-[#363636] flex items-center justify-center"><Right /></button>
    <button className="ml-px w-[30px] h-3 bg-[#363636]">1-MIDI</button>
    <span className="ml-[11px] mr-[17px] flex items-end gap-px h-2">
      {['h-1', 'h-2', 'h-[5px]', 'h-2', 'h-[3px]'].map((h, i) => <span key={i} className={`w-px ${h} bg-[#555]`} />)}
    </span>
  </footer>
);

const TaskIcon = ({ label, children, dot = true, active }) => (
  <button aria-label={label} className={`relative w-[27px] h-[27px] rounded-[3px] flex items-center justify-center ${active ? 'bg-[#2b2b2b]' : ''}`}>
    {children}
    {dot && <span className={`absolute bottom-0 h-px rounded-full ${active ? 'w-[10px] bg-[#e58a62]' : 'w-1 bg-[#999]'}`} />}
  </button>
);

const Taskbar = () => (
  <div className="relative flex items-center h-[33px] bg-[#1c1c1c] border-b border-black text-[#eee] font-['Open_Sans',sans-serif]">
    <div className="flex-1 basis-0" />
    <div className="flex items-center gap-[2px] ml-2">
      <button aria-label="Start" className="mr-2 grid grid-cols-2 gap-px size-4">
        <span className="bg-[#7ddcff]" /><span className="bg-[#52c8fa]" /><span className="bg-[#4cbcf7]" /><span className="bg-[#27a3ef]" />
      </button>
      <button className="mr-px h-[21px] w-[66px] rounded-full bg-[#2c2c2c] flex items-center justify-center gap-1 text-[8px]">
        <svg viewBox="0 0 20 20" className="size-[10px]" fill="none" stroke="currentColor" strokeWidth="2.4"><circle cx="8" cy="8" r="6.5" /><path d="M13 13l6 6" /></svg>
        Поиск
      </button>
      <TaskIcon label="Explorer">
        <svg viewBox="0 0 34 32" className="w-[17px] h-4"><path d="M1 3h11l4 4h17v22H1z" fill="#e5a92b" /><path d="M1 10h32v19H1z" fill="#ffd35c" /><path d="M7 20h20v9H7z" fill="#2272b5" /></svg>
      </TaskIcon>
      <TaskIcon label="Firefox">
        <svg viewBox="0 0 32 32" className="size-4"><circle cx="16" cy="17" r="14" fill="#ff7139" /><path d="M17 3c4-2 4-2 6 3 7 5 9 13 5 18-3-8-8-12-11-21z" fill="#ffcb3c" /><path d="M3 12c3 0 6-4 8-4l6 4-7 4c0 9 12 8 16 1-1 12-14 16-21 9z" fill="#ec2a55" /><circle cx="17" cy="18" r="6" fill="#6c3ccb" /></svg>
      </TaskIcon>
      <TaskIcon label="WPS Office" dot={false}>
        <svg viewBox="0 0 32 32" className="size-4"><rect width="32" height="32" rx="4" fill="#de1330" /><path d="M5 9h8M7 9l5 13 5-11 4 11 6-13H14" fill="none" stroke="#fff" strokeWidth="3" /></svg>
      </TaskIcon>
      <TaskIcon label="Spotify">
        <svg viewBox="0 0 32 32" className="size-4"><circle cx="16" cy="16" r="15" fill="#1ed760" /><path d="M7 11c6-2 13-1 18 2M8 16c5-1 11-1 15 2M9 21c4-1 9-1 12 2" fill="none" stroke="#15251a" strokeWidth="2.6" strokeLinecap="round" /></svg>
      </TaskIcon>
      <TaskIcon label="Cables">
        <svg viewBox="0 0 32 32" className="size-4"><path d="M10 14V6c0-4-3-4-3 0M22 14V6c0-4 3-4 3 0" fill="none" stroke="#5d7782" strokeWidth="2" /><path d="M5 13h9v16H5zM18 13h9v16h-9z" fill="#f3dc20" /><path d="M10 15v12M22 15v12" stroke="#292400" strokeWidth="2" strokeDasharray="5 2" /></svg>
      </TaskIcon>
      <TaskIcon label="Discord">
        <svg viewBox="0 0 32 32" className="size-4"><circle cx="16" cy="16" r="16" fill="#5865f2" /><path d="M9 10c4-2 10-2 14 0 2 4 3 8 3 11l-5 2-2-2h-6l-2 2-5-2c0-3 1-7 3-11z" fill="#fff" /><circle cx="12" cy="17" r="2" fill="#5865f2" /><circle cx="20" cy="17" r="2" fill="#5865f2" /></svg>
        <span className="absolute right-0 top-[2px] size-[9px] rounded-full bg-[#d83c48] text-[6px] leading-[9px]">9+</span>
      </TaskIcon>
      <TaskIcon label="Ableton Live" active>
        <span className="w-[14px] h-[14px] bg-[#d8f36d] text-[#1c1c1c] text-[6px] leading-[14px] font-bold">Live</span>
      </TaskIcon>
      <TaskIcon label="Telegram">
        <svg viewBox="0 0 32 32" className="size-4"><circle cx="16" cy="16" r="15" fill="#2a9fd6" /><path d="M5 16l19-8-3 17-7-5-2 4-1-6z" fill="#fff" /></svg>
        <span className="absolute right-0 top-1 w-[11px] h-[8px] rounded-[3px] bg-[#77828a] text-[6px] leading-[8px]">71</span>
      </TaskIcon>
      <TaskIcon label="OBS Studio">
        <svg viewBox="0 0 32 32" className="size-4" fill="none" stroke="#c8c8c8" strokeWidth="2"><circle cx="16" cy="16" r="14" /><path d="M16 16c-6-2-6-9-1-11M16 16c5-4 11 0 9 6M16 16c1 7-5 10-10 6" strokeWidth="3" /></svg>
        <span className="absolute right-[3px] top-[3px] size-[7px] rounded-full bg-[#e80c10]" />
      </TaskIcon>
    </div>
    <div className="flex-1 basis-0 flex items-center justify-end pr-[11px]">
      <button aria-label="Hidden icons">
        <svg viewBox="0 0 14 8" className="w-[7px] h-1" fill="none" stroke="currentColor" strokeWidth="2"><path d="M1 7l6-6 6 6" /></svg>
      </button>
      <button aria-label="Cloud drive" className="ml-3 size-[11px] rounded-[2px] bg-[#f2f6fb] flex items-center justify-center">
        <svg viewBox="0 0 18 14" className="w-[9px] h-[7px]" fill="none" stroke="#2a6fc9" strokeWidth="2"><path d="M5 12a4 4 0 0 1 0-7c2-5 9-4 9 1 4 1 3 6 0 6zM8 12l4-5" /></svg>
      </button>
      <button aria-label="Updates" className="ml-[10px] relative">
        <svg viewBox="0 0 22 22" className="size-[11px]" fill="none" stroke="#ddd" strokeWidth="2"><path d="M2 9c2-8 13-9 17-3M20 1v6h-6M2 21v-6h6M3 15c2 4 6 5 9 4" /></svg>
        <span className="absolute right-0 bottom-0 size-[5px] rounded-full bg-[#f59a1a]" />
      </button>
      <button aria-label="Microphone" className="ml-3">
        <svg viewBox="0 0 16 22" className="w-2 h-[11px]" fill="none" stroke="#b48276" strokeWidth="2"><path d="M5 4a3 3 0 0 1 6 0v7a3 3 0 0 1-6 0zM1 10c0 9 14 9 14 0M8 17v4" /></svg>
      </button>
      <button className="ml-[14px] text-[8px]">ENG</button>
      <button aria-label="Network" className="ml-[11px]">
        <svg viewBox="0 0 22 22" className="size-[11px]" fill="none" stroke="currentColor" strokeWidth="1.8"><path d="M13 3H2v13h15v-4M6 20h9M10 16v4M15 2v5h6V2zM18 7v5" /></svg>
      </button>
      <button aria-label="Volume" className="ml-[5px]">
        <svg viewBox="0 0 24 20" className="w-3 h-[10px]" fill="none" stroke="currentColor" strokeWidth="1.8"><path d="M1 7h4l5-5v16l-5-5H1zM13 7c2 2 2 4 0 6M16 4c4 3 4 9 0 12M19 2c5 4 5 12 0 16" /></svg>
      </button>
      <div className="ml-2 text-right text-[8px] leading-[11px]">3:43:18<br />28.12.2025</div>
      <button aria-label="Notifications" className="ml-[6px]">
        <svg viewBox="0 0 22 22" className="size-[11px]" fill="currentColor"><path d="M5 2h11v12l3 4H2l3-4zM8 19h6v2H8z" /></svg>
      </button>
    </div>
    <div className="absolute right-[3px] -top-[7px] flex flex-col gap-1">
      <button aria-label="Toggle mic" className="size-4 bg-black rounded-[2px] flex items-center justify-center">
        <svg viewBox="0 0 16 20" className="w-2 h-[10px]" fill="none" stroke="#fff" strokeWidth="2"><path d="M5 2h6v9H5z" fill="#fff" /><path d="M1 9c0 8 14 8 14 0M8 15v5" /></svg>
      </button>
      <button aria-label="Capture status" className="size-4 bg-black rounded-[2px] flex items-center justify-center">
        <svg viewBox="0 0 20 20" className="size-[10px]" fill="none" stroke="#fff" strokeWidth="2"><circle cx="10" cy="10" r="8" /><circle cx="10" cy="10" r="3" fill="#fff" /></svg>
      </button>
    </div>
  </div>
);

const App = () => {
  return (
    <div className="min-h-screen bg-black pr-[7px] overflow-hidden font-['Roboto','Noto_Sans',sans-serif]">
      <div className="flex flex-col bg-[#2a2a2a]">
        <TitleBar />
        <MenuBar />
        <Toolbar />
        <main className="relative flex min-h-[452px]">
          <Browser />
          <Arrangement />
          <Goal />
        </main>
        <div className="pt-[2px]"><Detail /></div>
        <StatusBar />
        <Taskbar />
      </div>
    </div>
  );
};

export default App;
